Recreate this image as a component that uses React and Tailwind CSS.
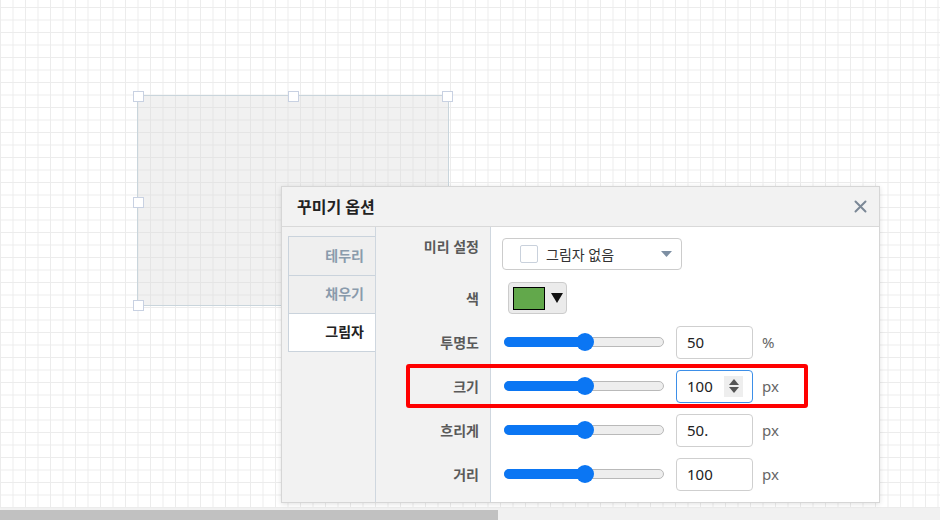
import React from 'react';

const rows = [
  { label: '미리 설정', kind: 'preset' },
  { label: '색', kind: 'color' },
  { label: '투명도', kind: 'slider', value: '50', unit: '%' },
  { label: '크기', kind: 'slider', value: '100', unit: 'px', focused: true },
  { label: '흐리게', kind: 'slider', value: '50.', unit: 'px' },
  { label: '거리', kind: 'slider', value: '100', unit: 'px' },
];

const handles = [
  'left-[133px] top-[91px]',
  'left-[288px] top-[91px]',
  'left-[442px] top-[91px]',
  'left-[133px] top-[197px]',
  'left-[442px] top-[197px]',
  'left-[133px] top-[300px]',
  'left-[288px] top-[300px]',
  'left-[442px] top-[300px]',
];

function Slider() {
  return (
    <div className="relative h-[10px] w-[160px] rounded-full border border-[#b9b9b9] bg-[#eeeeee]">
      <div className="absolute left-[-1px] top-[-1px] h-[10px] w-[82px] rounded-full bg-[#0b76f3]" />
      <div className="absolute left-[71px] top-1/2 h-[18px] w-[18px] -translate-y-1/2 rounded-full bg-[#0b76f3]" />
    </div>
  );
}

function NumberBox({ value, focused }) {
  return (
    <div
      className={`ml-[12px] flex h-[33px] w-[77px] items-center justify-between rounded-[4px] border pl-[10px] pr-[9px] text-[15px] text-[#222] ${
        focused ? 'border-[#3d8fe8]' : 'border-[#cfcfcf]'
      }`}
    >
      <span>{value}</span>
      {focused && (
        <div className="flex h-[21px] w-[19px] flex-col items-center justify-center gap-[2px] bg-[#eeeeee]">
          <svg width="10" height="6" viewBox="0 0 10 6">
            <path d="M5 0 L10 6 L0 6 Z" fill="#555" />
          </svg>
          <svg width="10" height="6" viewBox="0 0 10 6">
            <path d="M0 0 L10 0 L5 6 Z" fill="#555" />
          </svg>
        </div>
      )}
    </div>
  );
}

function RowControl({ row }) {
  if (row.kind === 'preset') {
    return (
      <div className="ml-[11px] flex h-[32px] w-[180px] items-center rounded-[4px] border border-[#cccccc] bg-white pl-[17px] pr-[9px]">
        <div className="h-[18px] w-[18px] rounded-[2px] border-[1.5px] border-[#c9d1dc]" />
        <span className="ml-[8px] text-[14px] text-[#333]">그림자 없음</span>
        <svg className="ml-auto" width="11" height="6" viewBox="0 0 11 6">
          <path d="M0 0 L11 0 L5.5 6 Z" fill="#7d8fa3" />
        </svg>
      </div>
    );
  }
  if (row.kind === 'color') {
    return (
      <div className="ml-[17px] flex h-[32px] w-[59px] items-center rounded-[4px] border border-[#cccccc] bg-[#ebebeb] pl-[4px]">
        <div className="h-[23px] w-[32px] border border-black bg-[#62a84b]" />
        <svg className="ml-[6px]" width="12" height="10" viewBox="0 0 12 10">
          <path d="M0 0 L12 0 L6 10 Z" fill="#111" />
        </svg>
      </div>
    );
  }
  return (
    <div className="ml-[13px] flex items-center">
      <Slider />
      <NumberBox value={row.value} focused={row.focused} />
      <span className="ml-[9px] text-[15px] text-[#666]">{row.unit}</span>
    </div>
  );
}

export default function App() {
  return (
    <div className="relative flex h-[520px] w-[940px] flex-col overflow-hidden bg-white font-['Noto_Sans','Noto_Sans_CJK_KR',sans-serif]">
      {/* canvas */}
      <div className="relative flex-1 bg-[linear-gradient(to_right,#ececec_1px,transparent_1px),linear-gradient(to_bottom,#ececec_1px,transparent_1px)] bg-[size:12.5px_12.5px] bg-[position:0_7px]">
        {/* selected shape */}
        <div className="absolute left-[137px] top-[95px] h-[211px] w-[312px] border border-[#c9d5dc] bg-[#dcdcdc]/40" />
        {handles.map((h) => (
          <div key={h} className={`absolute ${h} h-[11px] w-[11px] border border-[#c8d1e2] bg-white`} />
        ))}

        {/* dialog */}
        <div className="absolute left-[281px] top-[186px] flex h-[317px] w-[599px] flex-col border border-[#d6d6d6] bg-white shadow-[0_1px_5px_rgba(0,0,0,0.12)]">
          <div className="flex h-[40px] items-center justify-between border-b border-[#d9d9d9] bg-[#f2f2f2] pl-[15px] pr-[12px]">
            <span className="text-[16px] font-bold text-[#222]">꾸미기 옵션</span>
            <svg width="13" height="13" viewBox="0 0 13 13">
              <path d="M1.5 1.5 L11.5 11.5 M11.5 1.5 L1.5 11.5" stroke="#7b8896" strokeWidth="2" strokeLinecap="round" />
            </svg>
          </div>

          <div className="flex flex-1">
            {/* tabs */}
            <div className="w-[94px] border-r border-[#cfd7df] bg-[#f2f2f2] pl-[6px] pt-[9px]">
              <div className="border-l border-t border-[#cad3dc]">
                <div className="flex h-[39px] items-center justify-end border-b border-[#cad3dc] bg-[#efefef] pb-[2px] pr-[11px] text-[14px] font-bold text-[#8a9bac]">
                  테두리
                </div>
                <div className="flex h-[38px] items-center justify-end border-b border-[#cad3dc] bg-[#efefef] pb-[2px] pr-[11px] text-[14px] font-bold text-[#8a9bac]">
                  채우기
                </div>
                <div className="flex h-[38px] items-center justify-end border-b border-[#cad3dc] bg-white pb-[2px] pr-[11px] text-[14px] font-bold text-[#222]">
                  그림자
                </div>
              </div>
            </div>

            {/* labels */}
            <div className="w-[115px] border-r border-[#cfd7df] bg-[#f2f2f2] pt-[5px]">
              {rows.map((r, i) => (
                <div
                  key={r.label}
                  className={`flex h-[44px] justify-end pr-[11px] text-[14px] font-semibold text-[#5a5a5a] ${
                    i === 0 ? 'items-start pt-[4px]' : 'items-center'
                  }`}
                >
                  {r.label}
                </div>
              ))}
            </div>

            {/* controls */}
            <div className="flex-1 bg-white pt-[5px]">
              {rows.map((r) => (
                <div key={r.label} className="flex h-[44px] items-center">
                  <RowControl row={r} />
                </div>
              ))}
            </div>
          </div>
        </div>

        {/* highlight */}
        <div className="absolute left-[406px] top-[364px] h-[44px] w-[402px] rounded-[3px] border-4 border-[#ff0000]" />
      </div>

      {/* horizontal scrollbar */}
      <div className="h-[12px] bg-[#f1f1f1] pt-[2px]">
        <div className="h-full w-[498px] bg-[#c1c1c1]" />
      </div>
    </div>
  );
}
